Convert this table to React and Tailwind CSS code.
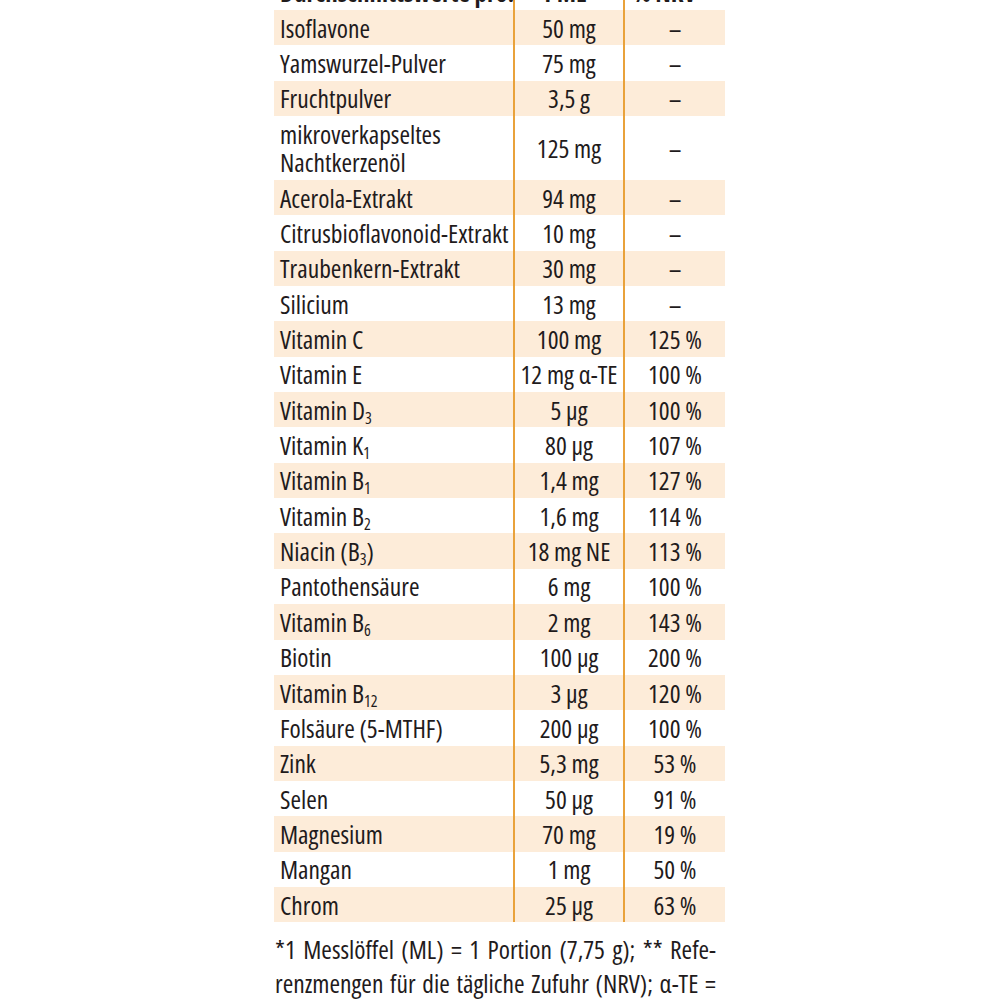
const sub = (n) => <sub className="text-[16px] leading-none">{n}</sub>;

const rows = [
  ["Isoflavone", "50 mg", "–"],
  ["Yamswurzel-Pulver", "75 mg", "–"],
  ["Fruchtpulver", "3,5 g", "–"],
  [<>mikroverkapseltes<br />Nachtkerzenöl</>, "125 mg", "–", true],
  ["Acerola-Extrakt", "94 mg", "–"],
  ["Citrusbioflavonoid-Extrakt", "10 mg", "–"],
  ["Traubenkern-Extrakt", "30 mg", "–"],
  ["Silicium", "13 mg", "–"],
  ["Vitamin C", "100 mg", "125 %"],
  ["Vitamin E", "12 mg α-TE", "100 %"],
  [<>Vitamin D{sub(3)}</>, "5 µg", "100 %"],
  [<>Vitamin K{sub(1)}</>, "80 µg", "107 %"],
  [<>Vitamin B{sub(1)}</>, "1,4 mg", "127 %"],
  [<>Vitamin B{sub(2)}</>, "1,6 mg", "114 %"],
  [<>Niacin (B{sub(3)})</>, "18 mg NE", "113 %"],
  ["Pantothensäure", "6 mg", "100 %"],
  [<>Vitamin B{sub(6)}</>, "2 mg", "143 %"],
  ["Biotin", "100 µg", "200 %"],
  [<>Vitamin B{sub(12)}</>, "3 µg", "120 %"],
  ["Folsäure (5-MTHF)", "200 µg", "100 %"],
  ["Zink", "5,3 mg", "53 %"],
  ["Selen", "50 µg", "91 %"],
  ["Magnesium", "70 mg", "19 %"],
  ["Mangan", "1 mg", "50 %"],
  ["Chrom", "25 µg", "63 %"],
];

// condensed face, like the print original
const font = { fontFamily: '"Open Sans", "Liberation Sans", sans-serif', fontStretch: "79%" };

export default function App() {
  return (
    <div className="w-[1000px] h-[1000px] overflow-hidden bg-white text-[#1f1b1c] font-medium" style={font}>
      <div className="ml-[274px] w-[451px] -mt-[26px]">
        <div className="grid grid-cols-[239px_112px_100px] h-[36px] text-[25px] font-bold leading-[28px]">
          <div className="flex items-center pl-[6px] whitespace-nowrap">Durchschnittswerte pro:</div>
          <div className="flex items-center justify-center border-x-2 border-[#e9a23b]">1 ML*</div>
          <div className="flex items-center justify-center">% NRV**</div>
        </div>
        {rows.map(([name, amount, nrv, tall], i) => (
          <div
            key={i}
            className={`grid grid-cols-[239px_112px_100px] text-[25.5px] leading-[28px] ${tall ? "h-[64px]" : "h-[35.35px]"} ${i % 2 === 0 ? "bg-[#fdecd9]" : "bg-white"}`}
          >
            <div className="flex items-center pl-[6px] whitespace-nowrap">
              <span>{name}</span>
            </div>
            <div className="flex items-center justify-center border-x-2 border-[#e9a23b] whitespace-nowrap">
              {amount}
            </div>
            <div className="flex items-center justify-center whitespace-nowrap">{nrv}</div>
          </div>
        ))}
        <div className="pt-[10px] pl-[1px] w-[442px] text-[25.5px] leading-[34px] text-justify [text-align-last:justify]">
          <div>*1 Messlöffel (ML) = 1 Portion (7,75 g); ** Refe-</div>
          <div>renzmengen für die tägliche Zufuhr (NRV); α-TE =</div>
          <div>Alpha-Tocopherol-Äquivalente; NE = Niacin-Äqui-</div>
        </div>
      </div>
    </div>
  );
}
